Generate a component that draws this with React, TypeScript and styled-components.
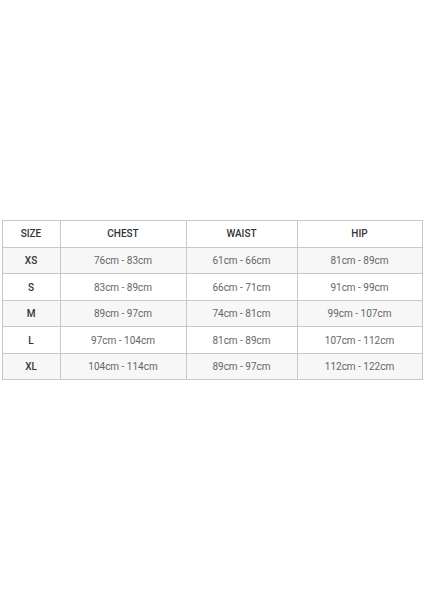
import styled, { createGlobalStyle } from "styled-components";

const GlobalStyle = createGlobalStyle`
  html, body {
    margin: 0;
    padding: 0;
    background: #fff;
    font-family: Roboto, "Liberation Sans", sans-serif;
  }
`;

const Page = styled.div`
  width: 424px;
  height: 600px;
  display: flex;
  align-items: center;
  justify-content: center;
`;

const Table = styled.table`
  width: 420px;
  border-collapse: collapse;
  table-layout: fixed;
  font-size: 10px;
  color: #555;
`;

const Head = styled.th`
  height: 26px;
  padding: 0;
  border: 1px solid #c8c8c8;
  font-weight: 500;
  color: #333;
  text-align: center;
  background: #fff;
`;

const Row = styled.tr<{ $shaded: boolean }>`
  background: ${(p) => (p.$shaded ? "#f7f7f7" : "#fff")};
`;

const Cell = styled.td<{ $bold?: boolean }>`
  height: 25.5px;
  padding: 0;
  border: 1px solid #c8c8c8;
  text-align: center;
  font-weight: ${(p) => (p.$bold ? 500 : 400)};
  color: ${(p) => (p.$bold ? "#333" : "#666")};
`;

const rows = [
  ["XS", "76cm - 83cm", "61cm - 66cm", "81cm - 89cm"],
  ["S", "83cm - 89cm", "66cm - 71cm", "91cm - 99cm"],
  ["M", "89cm - 97cm", "74cm - 81cm", "99cm - 107cm"],
  ["L", "97cm - 104cm", "81cm - 89cm", "107cm - 112cm"],
  ["XL", "104cm - 114cm", "89cm - 97cm", "112cm - 122cm"],
];

const App = () => {
  return (
    <>
      <GlobalStyle />
      <Page>
        <Table>
          <colgroup>
            <col style={{ width: 58 }} />
            <col style={{ width: 126 }} />
            <col style={{ width: 111 }} />
            <col style={{ width: 125 }} />
          </colgroup>
          <thead>
            <tr>
              <Head>SIZE</Head>
              <Head>CHEST</Head>
              <Head>WAIST</Head>
              <Head>HIP</Head>
            </tr>
          </thead>
          <tbody>
            {rows.map((r, i) => (
              <Row key={r[0]} $shaded={i % 2 === 0}>
                <Cell $bold>{r[0]}</Cell>
                <Cell>{r[1]}</Cell>
                <Cell>{r[2]}</Cell>
                <Cell>{r[3]}</Cell>
              </Row>
            ))}
          </tbody>
        </Table>
      </Page>
    </>
  );
};

export default App;
